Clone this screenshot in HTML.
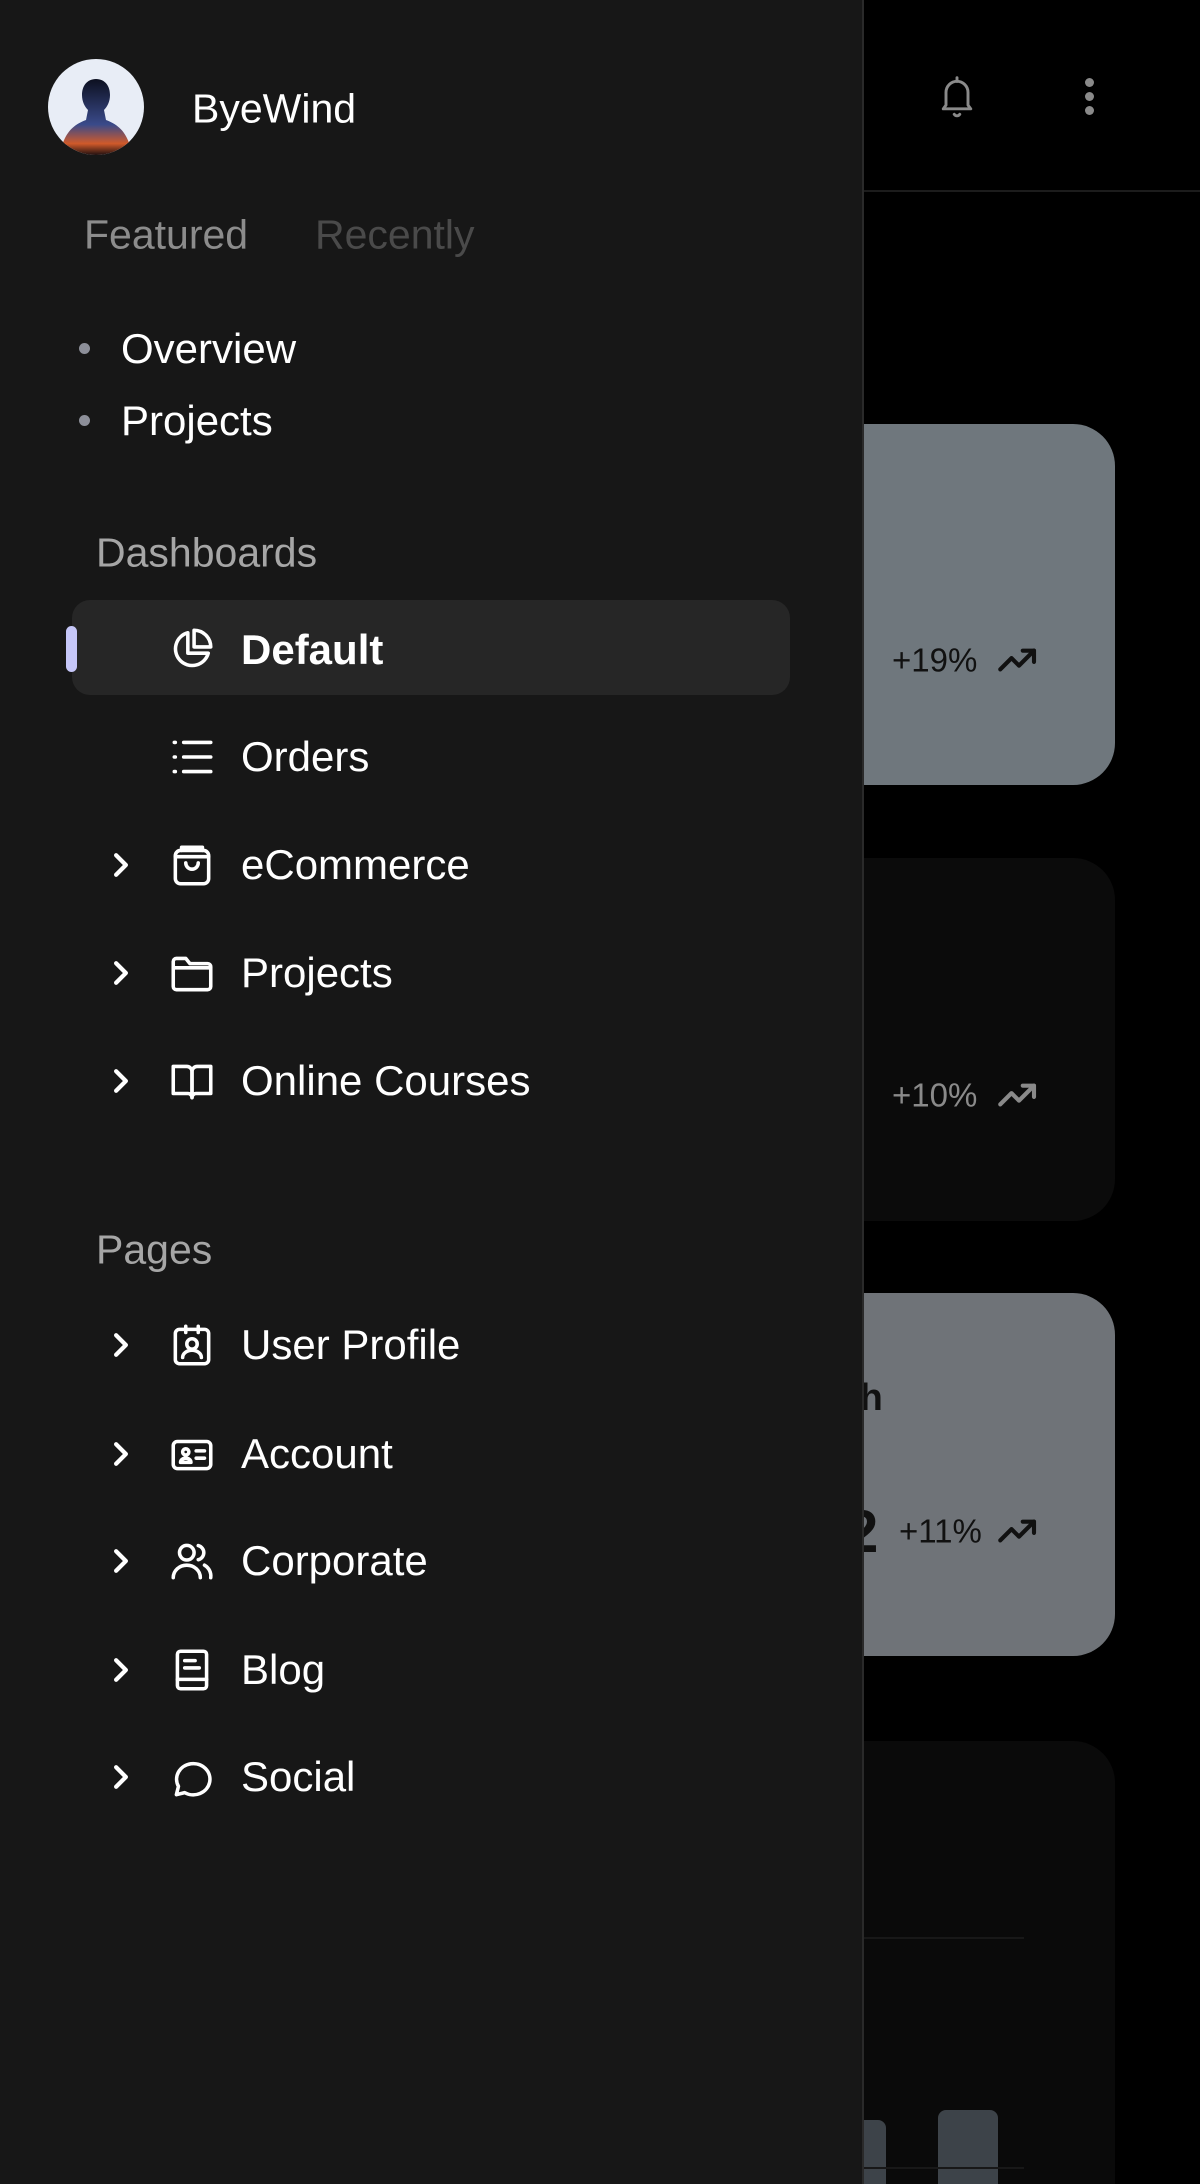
<!DOCTYPE html>
<html style="width:1200px;height:2184px;overflow:hidden"><head><meta charset="utf-8"><style>
*{margin:0;padding:0;box-sizing:border-box}
body{width:1200px;height:2184px;background:#000;position:relative;overflow:hidden;font-family:"Liberation Sans",sans-serif}
.abs{position:absolute}
.side{left:0;top:0;width:864px;height:2184px;background:#171717;border-right:2px solid #2a2a2a}
.t{position:absolute;white-space:nowrap;line-height:1;transform:translateY(-50%)}
.w{color:#fff;font-size:42px}
.ic{position:absolute;width:50px;height:50px;transform:translateY(-50%)}
.ic svg{width:50px;height:50px;fill:none;stroke:#fff;stroke-width:1.7;stroke-linecap:round;stroke-linejoin:round}
.chev{position:absolute;left:108px;width:26px;height:26px;transform:translateY(-50%)}
.chev svg{width:26px;height:26px;fill:none;stroke:#fff;stroke-width:2.6;stroke-linecap:round;stroke-linejoin:round}
.card{position:absolute;left:820px;width:295px;border-radius:42px}
</style></head><body>
<div class="abs" style="left:864px;top:190px;width:336px;height:2px;background:#1c1c1c"></div>
<svg class="abs" style="left:935px;top:72px" width="44" height="48" viewBox="0 0 24 26" fill="none" stroke="#8a8a8a" stroke-width="1.6" stroke-linecap="round" stroke-linejoin="round"><path d="M6 18V11a6 6 0 0 1 12 0v7l1.5 2h-15z"/><path d="M10.5 23a1.8 1.8 0 0 0 3 0"/><path d="M12 3v2"/></svg>
<div class="abs" style="left:1085px;top:78px;width:9px;height:9px;border-radius:50%;background:#8a8a8a"></div>
<div class="abs" style="left:1085px;top:92px;width:9px;height:9px;border-radius:50%;background:#8a8a8a"></div>
<div class="abs" style="left:1085px;top:106px;width:9px;height:9px;border-radius:50%;background:#8a8a8a"></div>

<div class="card" style="top:424px;height:361px;background:#6f777d"></div>
<div class="t" style="left:892px;top:660px;font-size:33px;color:#111">+19%</div>
<svg class="abs" style="left:996px;top:645px" width="46" height="30" viewBox="0 0 24 16" fill="none" stroke="#111" stroke-width="2.2" stroke-linecap="round" stroke-linejoin="round"><path d="M2 13l6-6 4 4 8-8"/><path d="M14 3h6v6"/></svg>

<div class="card" style="top:858px;height:363px;background:#0b0b0b"></div>
<div class="t" style="left:892px;top:1095px;font-size:33px;color:#8a8a8a">+10%</div>
<svg class="abs" style="left:996px;top:1080px" width="46" height="30" viewBox="0 0 24 16" fill="none" stroke="#8a8a8a" stroke-width="2.2" stroke-linecap="round" stroke-linejoin="round"><path d="M2 13l6-6 4 4 8-8"/><path d="M14 3h6v6"/></svg>

<div class="card" style="top:1293px;height:363px;background:#6f7378"></div>
<div class="t" style="left:847px;top:1398px;font-size:38px;font-weight:bold;color:#111">th</div>
<div class="t" style="left:845px;top:1532px;font-size:60px;font-weight:bold;color:#111">2</div>
<div class="t" style="left:899px;top:1531px;font-size:33px;color:#111">+11%</div>
<svg class="abs" style="left:996px;top:1516px" width="46" height="30" viewBox="0 0 24 16" fill="none" stroke="#111" stroke-width="2.2" stroke-linecap="round" stroke-linejoin="round"><path d="M2 13l6-6 4 4 8-8"/><path d="M14 3h6v6"/></svg>

<div class="abs" style="left:820px;top:1741px;width:295px;height:443px;border-radius:42px 42px 0 0;background:#0a0a0a"></div>
<div class="abs" style="left:864px;top:1937px;width:160px;height:2px;background:#181818"></div>
<div class="abs" style="left:856px;top:2120px;width:30px;height:64px;border-radius:8px 8px 0 0;background:#3d4349"></div>
<div class="abs" style="left:938px;top:2110px;width:60px;height:74px;border-radius:8px 8px 0 0;background:#3d4349"></div>
<div class="abs" style="left:864px;top:2167px;width:160px;height:2px;background:#181818"></div>

<div class="abs side"></div>
<svg class="abs" style="left:48px;top:59px" width="96" height="96" viewBox="0 0 96 96"><defs><clipPath id="c"><circle cx="48" cy="48" r="48"/></clipPath><linearGradient id="g" x1="0" y1="0" x2="0" y2="1"><stop offset="0" stop-color="#0c1020"/><stop offset=".6" stop-color="#3a4a8a"/><stop offset=".85" stop-color="#d05a2a"/><stop offset="1" stop-color="#201010"/></linearGradient></defs><g clip-path="url(#c)"><rect width="96" height="96" fill="#e8edf6"/><path d="M48 20c-9 0-14 7-14 16 0 7 3 12 6 15l-2 10c-10 4-22 10-26 35h72c-4-25-16-31-26-35l-2-10c3-3 6-8 6-15 0-9-5-16-14-16z" fill="url(#g)"/></g></svg>
<div class="t w" style="left:192px;top:109px;font-size:41px">ByeWind</div>

<div class="t" style="left:84px;top:235px;font-size:41px;color:#8c8c8c">Featured</div>
<div class="t" style="left:315px;top:235px;font-size:41px;color:#4a4a4a">Recently</div>

<div class="abs" style="left:79px;top:343px;width:11px;height:11px;border-radius:50%;background:#8d8f99"></div>
<div class="t w" style="left:121px;top:349px">Overview</div>
<div class="abs" style="left:79px;top:415px;width:11px;height:11px;border-radius:50%;background:#8d8f99"></div>
<div class="t w" style="left:121px;top:421px">Projects</div>

<div class="t" style="left:96px;top:553px;font-size:41px;color:#a6a6a6">Dashboards</div>

<div class="abs" style="left:72px;top:600px;width:718px;height:95px;border-radius:18px;background:#262626"></div>
<div class="abs" style="left:66px;top:626px;width:11px;height:46px;border-radius:6px;background:#c6c7f8"></div>
<div class="ic" style="left:167px;top:649px"><svg viewBox="0 0 24 24"><path d="M10 4.2A8 8 0 1 0 19.8 14H10z"/><path d="M13 3v8h8a8 8 0 0 0-8-8z"/></svg></div>
<div class="t w" style="left:241px;top:650px;font-weight:bold">Default</div>

<div class="ic" style="left:167px;top:757px"><svg viewBox="0 0 24 24"><path d="M8 5h13M8 12h13M8 19h13"/><path d="M3.5 5h.5M3.5 12h.5M3.5 19h.5"/></svg></div>
<div class="t w" style="left:241px;top:757px">Orders</div>

<div class="chev" style="top:865px"><svg viewBox="0 0 16 16"><path d="M5 2l6 6-6 6"/></svg></div>
<div class="ic" style="left:167px;top:865px"><svg viewBox="0 0 24 24"><rect x="4" y="5" width="16" height="16" rx="2.5"/><path d="M7 5V3.5h10V5"/><path d="M4 8h16"/><path d="M9 11a3 3 0 0 0 6 0"/></svg></div>
<div class="t w" style="left:241px;top:865px">eCommerce</div>

<div class="chev" style="top:973px"><svg viewBox="0 0 16 16"><path d="M5 2l6 6-6 6"/></svg></div>
<div class="ic" style="left:167px;top:973px"><svg viewBox="0 0 24 24"><path d="M3 6.5a1.5 1.5 0 0 1 1.5-1.5H9l2 2.5h8.5A1.5 1.5 0 0 1 21 9v9.5a1.5 1.5 0 0 1-1.5 1.5h-15A1.5 1.5 0 0 1 3 18.5z"/><path d="M3 9.5h18"/></svg></div>
<div class="t w" style="left:241px;top:973px">Projects</div>

<div class="chev" style="top:1081px"><svg viewBox="0 0 16 16"><path d="M5 2l6 6-6 6"/></svg></div>
<div class="ic" style="left:167px;top:1081px"><svg viewBox="0 0 24 24"><path d="M3 5h6.5A2.5 2.5 0 0 1 12 7.5V20a2 2 0 0 0-2-2H3z"/><path d="M21 5h-6.5A2.5 2.5 0 0 0 12 7.5V20a2 2 0 0 1 2-2h7z"/></svg></div>
<div class="t w" style="left:241px;top:1081px">Online Courses</div>

<div class="t" style="left:96px;top:1250px;font-size:41px;color:#a6a6a6">Pages</div>

<div class="chev" style="top:1345px"><svg viewBox="0 0 16 16"><path d="M5 2l6 6-6 6"/></svg></div>
<div class="ic" style="left:167px;top:1345px"><svg viewBox="0 0 24 24"><rect x="4" y="4.5" width="16" height="16.5" rx="2"/><path d="M9 3v3M15 3v3"/><circle cx="12" cy="11.5" r="2.5"/><path d="M7.5 18a4.5 3.5 0 0 1 9 0"/></svg></div>
<div class="t w" style="left:241px;top:1345px">User Profile</div>

<div class="chev" style="top:1454px"><svg viewBox="0 0 16 16"><path d="M5 2l6 6-6 6"/></svg></div>
<div class="ic" style="left:167px;top:1454px"><svg viewBox="0 0 24 24"><rect x="3" y="6" width="18" height="13" rx="2"/><circle cx="9" cy="11" r="1.5"/><path d="M6.5 16a2.5 2 0 0 1 5 0z"/><path d="M14 10.5h4M14 14h4"/></svg></div>
<div class="t w" style="left:241px;top:1454px">Account</div>

<div class="chev" style="top:1561px"><svg viewBox="0 0 16 16"><path d="M5 2l6 6-6 6"/></svg></div>
<div class="ic" style="left:167px;top:1561px"><svg viewBox="0 0 24 24"><circle cx="9.5" cy="8" r="3.5"/><path d="M3 20a6.5 6 0 0 1 13 0"/><path d="M15 4.6a3.5 3.5 0 0 1 0 6.8"/><path d="M18 14a6 6 0 0 1 3 6"/></svg></div>
<div class="t w" style="left:241px;top:1561px">Corporate</div>

<div class="chev" style="top:1670px"><svg viewBox="0 0 16 16"><path d="M5 2l6 6-6 6"/></svg></div>
<div class="ic" style="left:167px;top:1670px"><svg viewBox="0 0 24 24"><rect x="5" y="3" width="14" height="18" rx="1.5"/><path d="M8.5 7.5h5M8.5 11h7"/><path d="M5 16.5h14"/></svg></div>
<div class="t w" style="left:241px;top:1670px">Blog</div>

<div class="chev" style="top:1777px"><svg viewBox="0 0 16 16"><path d="M5 2l6 6-6 6"/></svg></div>
<div class="ic" style="left:167px;top:1777px"><svg viewBox="0 0 24 24"><path d="M4.5 20.5l1-4A8 7.5 0 1 1 8.5 19.5z"/></svg></div>
<div class="t w" style="left:241px;top:1777px">Social</div>
</body></html>
